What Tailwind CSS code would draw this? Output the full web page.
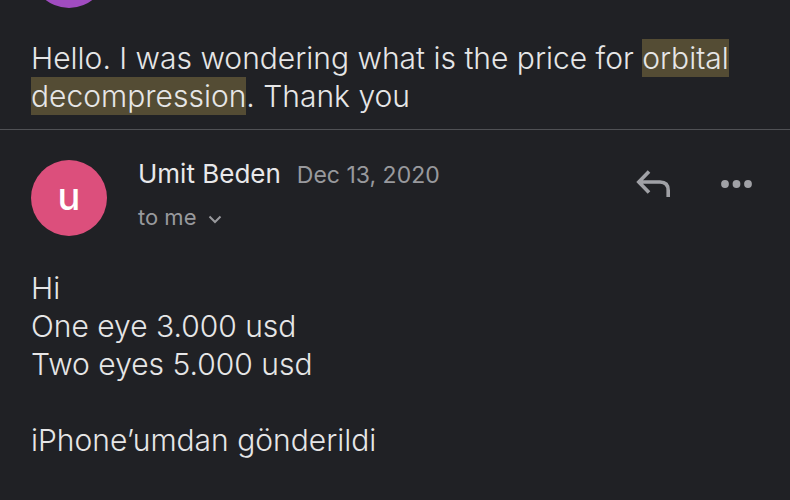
<!DOCTYPE html>
<html lang="en">
<head>
<meta charset="utf-8">
<meta name="viewport" content="width=device-width, initial-scale=1">
<title>Conversation</title>
<script src="https://cdn.jsdelivr.net/npm/@tailwindcss/browser@4"></script>
</head>
<body class="min-h-screen overflow-x-hidden bg-[#202125] font-['Inter',sans-serif] text-[#e6e6e7]">
<main class="flex min-h-screen flex-col">
  <article class="border-b border-[#505155] pb-[14px]">
    <div class="flex h-2 items-end px-[31px]"><span class="size-[76px] shrink-0 rounded-full bg-[#a04cc0]"></span></div>
    <p class="mt-[31px] px-[31px] text-[30px] leading-[38px] font-light">Hello. I was wondering what is the price for <mark class="bg-[#544c34] py-px text-inherit">orbital</mark><br><mark class="bg-[#544c34] py-px text-inherit">decompression</mark>. Thank you</p>
  </article>
  <article class="grow">
    <header class="flex items-start pt-[30px] pr-[38px] pl-[31px]">
      <span class="flex size-[76px] shrink-0 items-center justify-center rounded-full bg-[#dc4f7c] pb-1 text-[38px] font-medium text-white">u</span>
      <div class="ml-[31px] grow">
        <div class="flex items-baseline gap-4 leading-7"><h2 class="text-[26px] text-[#e8e8ea]">Umit Beden</h2><time datetime="2020-12-13" class="text-[23px] text-[#98999d]">Dec 13, 2020</time></div>
        <button type="button" class="mt-[14px] flex items-center gap-3 text-[22px] leading-7 text-[#98999d]">to me
          <svg class="mt-1 h-[9px] w-[14px]" viewBox="0 0 14 9" fill="none" stroke="currentColor" stroke-width="2"><path d="M1.500 1.500L7 7l5.500-5.500"/></svg>
        </button>
      </div>
      <div class="flex items-center gap-[50px] pt-2 text-[#a0a1a6]">
        <button type="button" aria-label="Reply"><svg class="h-8 w-[35px]" viewBox="0 0 35 32" fill="none" stroke="currentColor" stroke-width="3.600"><path d="M13 3.500L2.800 14l10.200 10.500M3 14h21q8.200 0 8.200 8.500v6.500"/></svg></button>
        <button type="button" aria-label="More options"><svg class="h-2 w-[31px]" viewBox="0 0 31 8" fill="currentColor"><circle cx="4" cy="4" r="3.900"/><circle cx="15.500" cy="4" r="3.900"/><circle cx="27" cy="4" r="3.900"/></svg></button>
      </div>
    </header>
    <div class="px-[31px] pt-[33px] text-[30px] leading-[38px] font-light"><p>Hi</p><p>One eye 3.000 usd</p><p>Two eyes 5.000 usd</p><p class="mt-[38px]">iPhone’umdan gönderildi</p></div>
  </article>
</main>
</body>
</html>
